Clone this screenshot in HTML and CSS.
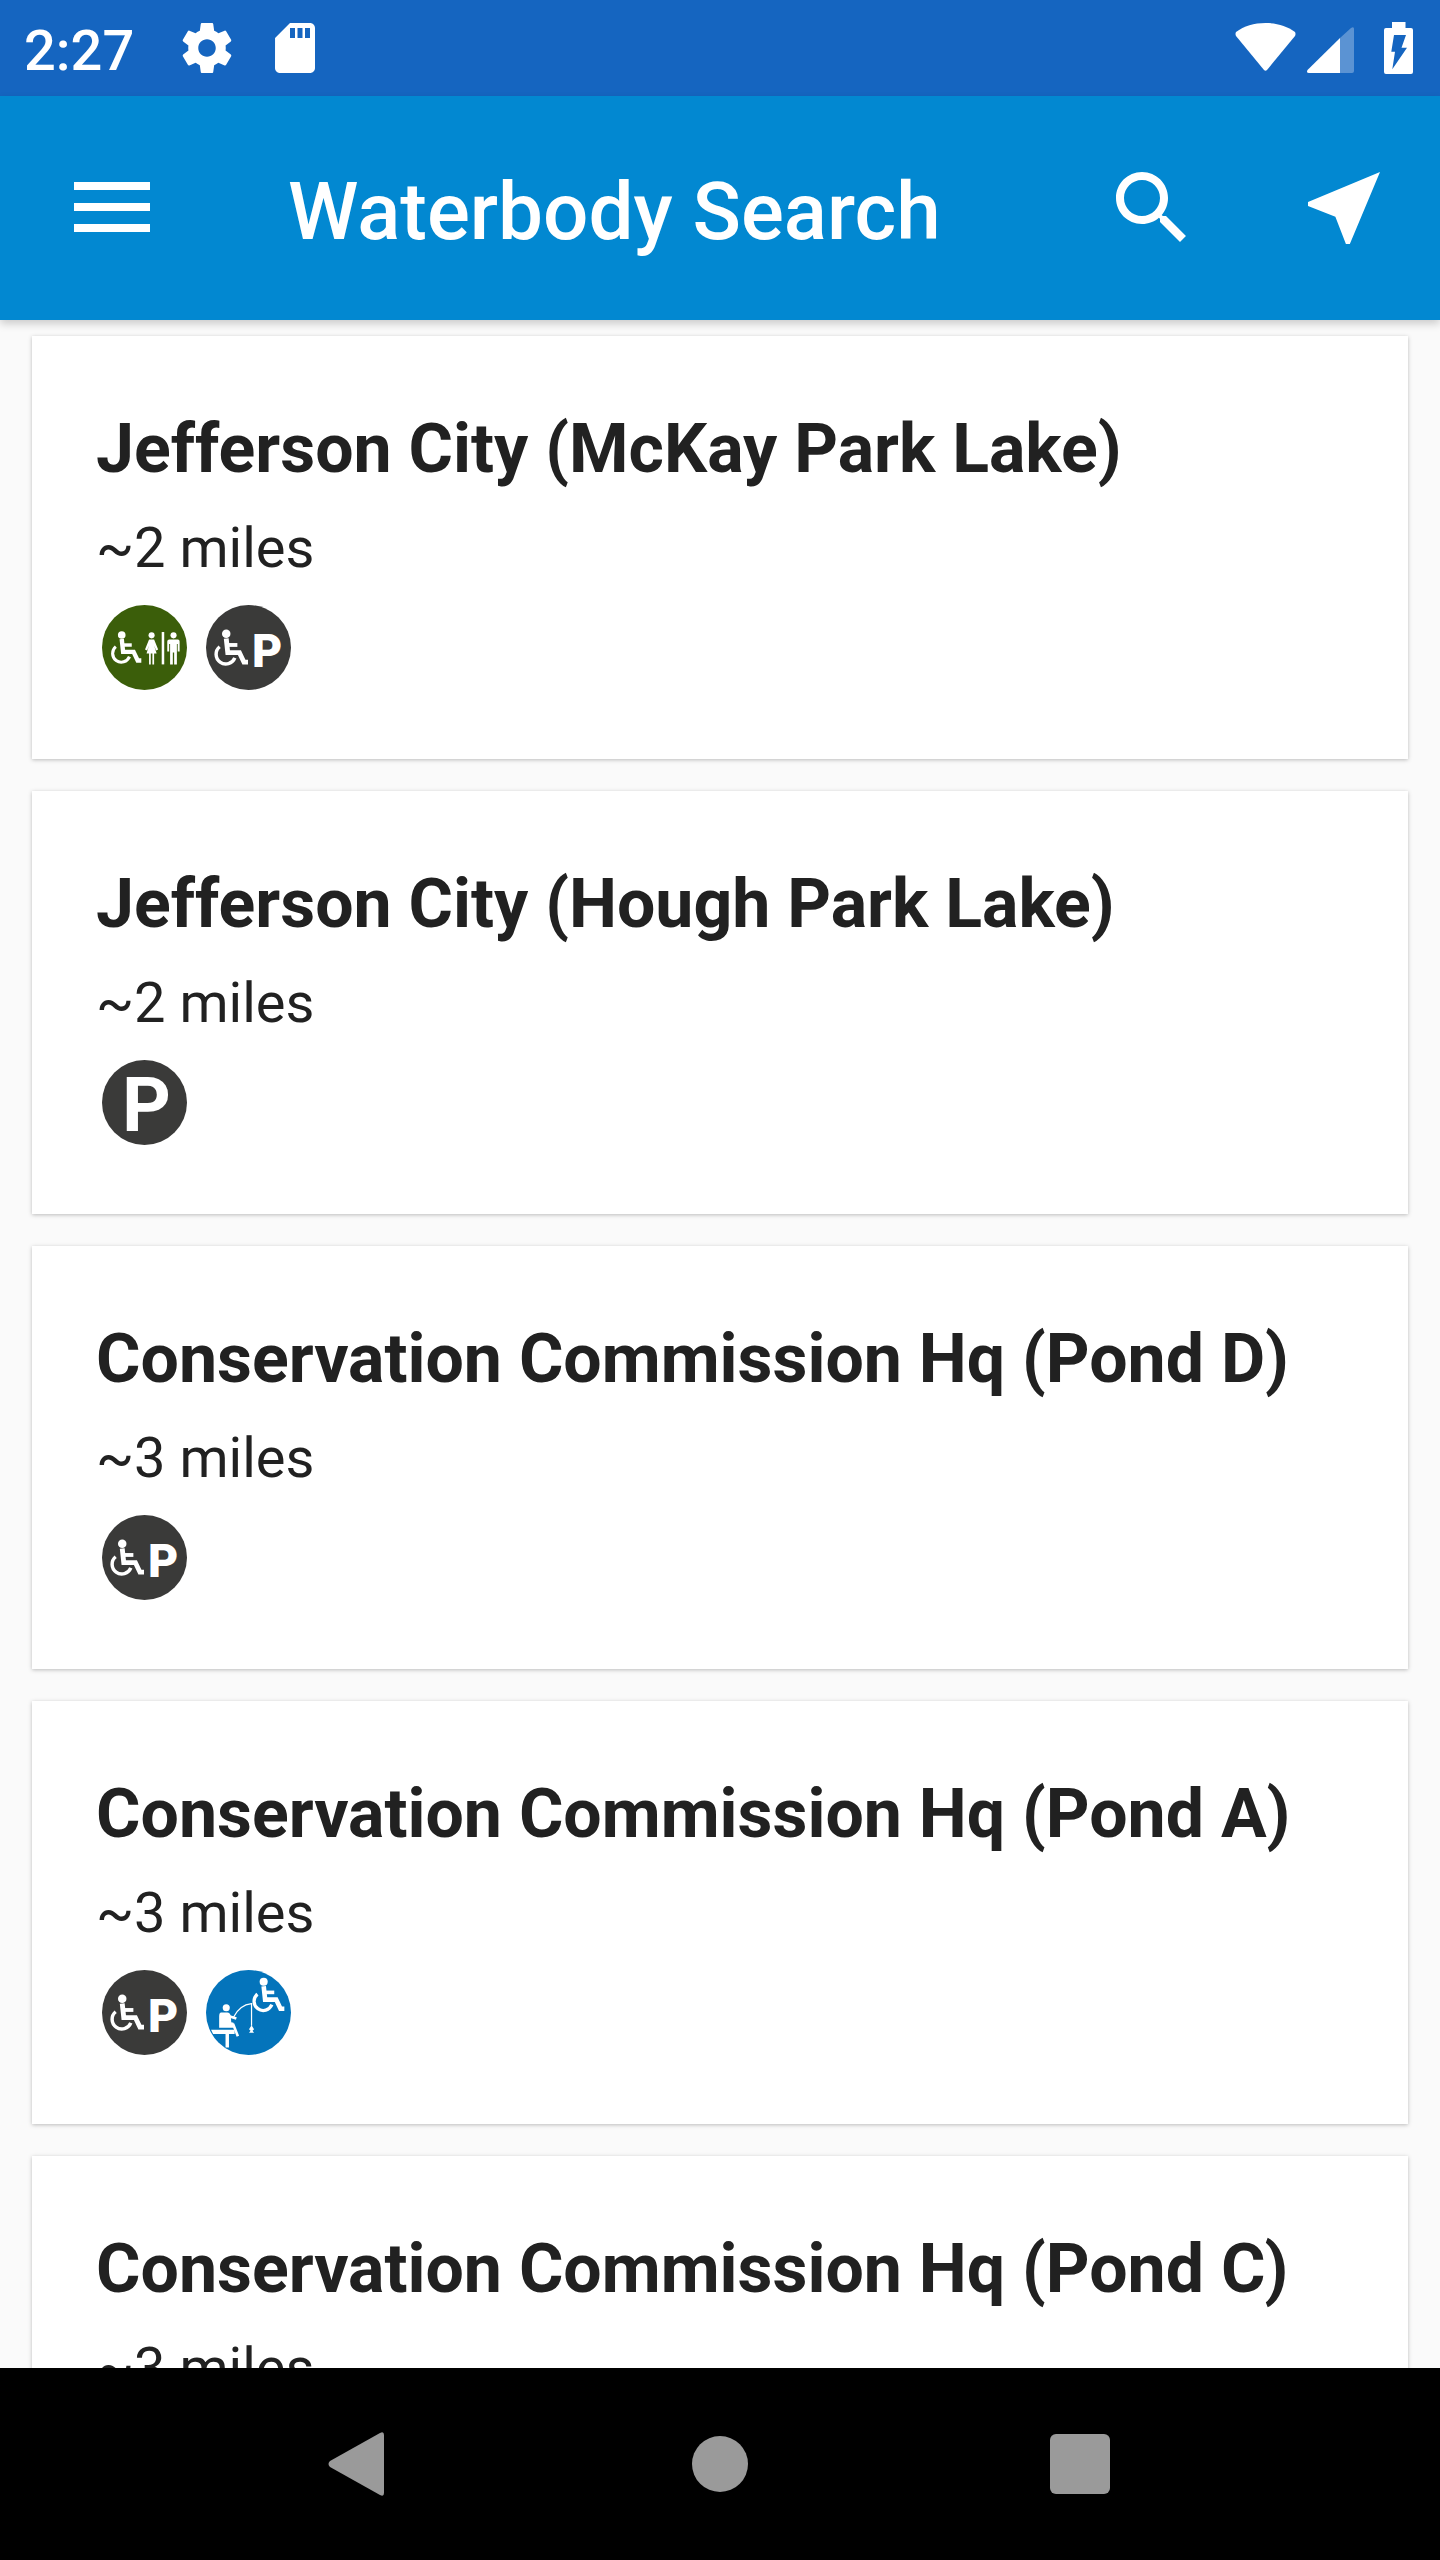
FILE: index.html
```html
<!DOCTYPE html>
<html lang="en">
<head>
<meta charset="utf-8">
<title>Waterbody Search</title>
<link rel="stylesheet" href="styles.css">
</head>
<body>
<svg class="defs" width="0" height="0" aria-hidden="true">
  <defs>
    <g id="chair">
      <circle cx="20" cy="28.5" r="4.2" fill="#fff"/>
      <path d="M20 33L21.500 47H33L37.500 56.500H41.500" fill="none" stroke="#fff" stroke-width="4.800"/>
      <path d="M21 39.500H31" fill="none" stroke="#fff" stroke-width="3.800"/>
      <path d="M13.500 41.300A9.600 9.600 0 1 0 28.500 52.300" fill="none" stroke="#fff" stroke-width="3.400"/>
    </g>
  </defs>
</svg>
<div class="app">
  <div class="status">
    <div class="status-left">
      <span class="clock">2:27</span>
      <svg class="ico-60 gear" viewBox="0 0 24 24"><path fill="#fff" d="M19.43 12.98c.04-.32.07-.64.07-.98s-.03-.66-.07-.98l2.11-1.65c.19-.15.24-.42.12-.64l-2-3.46c-.12-.22-.39-.3-.61-.22l-2.49 1c-.52-.4-1.08-.73-1.69-.98l-.38-2.65C14.46 2.18 14.25 2 14 2h-4c-.25 0-.46.18-.49.42l-.38 2.65c-.61.25-1.17.59-1.69.98l-2.49-1c-.23-.09-.49 0-.61.22l-2 3.46c-.13.22-.07.49.12.64l2.11 1.65c-.04.32-.07.65-.07.98s.03.66.07.98l-2.11 1.65c-.19.15-.24.42-.12.64l2 3.46c.12.22.39.3.61.22l2.49-1c.52.4 1.08.73 1.69.98l.38 2.65c.03.24.24.42.49.42h4c.25 0 .46-.18.49-.42l.38-2.65c.61-.25 1.17-.59 1.69-.98l2.49 1c.23.09.49 0 .61-.22l2-3.46c.12-.22.07-.49-.12-.64l-2.11-1.65zM12 15.500c-1.93 0-3.500-1.57-3.500-3.500s1.57-3.500 3.500-3.500 3.500 1.57 3.500 3.500-1.57 3.500-3.500 3.500z"/></svg>
      <svg class="ico-60 sd" viewBox="0 0 24 24"><path fill="#fff" d="M18 2h-8L4.020 8 4 20c0 1.100.9 2 2 2h12c1.100 0 2-.9 2-2V4c0-1.100-.9-2-2-2zm-6 6h-2V4h2v4zm3 0h-2V4h2v4zm3 0h-2V4h2v4z"/></svg>
    </div>
    <div class="status-right">
      <svg class="wifi" viewBox="0 0 61 48"><path fill="#fff" d="M1 9C9 3 19 0 30.500 0S52 3 60 9Q61 11 60 13L32 47Q30.500 48.500 29 47L1 13Q0 11 1 9Z"/></svg>
      <svg class="signal" viewBox="0 0 47 46"><path fill="#fff" fill-opacity=".3" d="M44 1Q47 -1 47 2V44Q47 46 45 46H33V11Z"/><path fill="#fff" d="M33 11V46H2Q-1 46 .5 43Z"/></svg>
      <svg class="battery" viewBox="0 0 29 52"><path fill="#fff" d="M8 0H21.500V6H27Q29 6 29 8V50Q29 52 27 52H2Q0 52 0 50V8Q0 6 2 6H8Z"/><path fill="#1565c0" d="M10 13H22L17.500 25.700H23L8.300 47.300L11 29.700H7.300Z"/></svg>
    </div>
  </div>
  <header class="toolbar">
    <svg class="ico-96 menu" viewBox="0 0 96 96"><path fill="#fff" d="M10 22H86V30H10ZM10 43H86V51H10ZM10 64H86V72H10Z"/></svg>
    <h1 class="toolbar-title">Waterbody Search</h1>
    <svg class="ico-96 search" viewBox="0 0 24 24"><path fill="#fff" d="M15.500 14h-.79l-.28-.27C15.410 12.590 16 11.110 16 9.500 16 5.910 13.090 3 9.500 3S3 5.910 3 9.500 5.910 16 9.500 16c1.610 0 3.090-.59 4.230-1.570l.27.28v.79l5 4.990L20.490 19l-4.990-5zm-6 0C7.010 14 5 11.990 5 9.500S7.010 5 9.500 5 14 7.010 14 9.500 11.990 14 9.500 14z"/></svg>
    <svg class="ico-96 near" viewBox="0 0 24 24"><path fill="#fff" d="M21 3L3 10.530v.98l6.840 2.650L12.480 21h.98L21 3z"/></svg>
  </header>
  <main class="list">
    <article class="card">
      <h2 class="name">Jefferson City (McKay Park Lake)</h2>
      <p class="dist">~2 miles</p>
      <div class="badges">
        <svg class="badge" viewBox="0 0 84 84"><circle cx="42" cy="42" r="42" fill="#3b5e0a"/><use href="#chair" transform="translate(1.500 4) scale(.9)"/><circle cx="49" cy="30" r="3" fill="#fff"/><path fill="#fff" d="M46.500 34H51.500L55.500 44L53.500 45L51.500 40L54 48H51.500V58.700H49.800V48H48.200V58.700H46.500V48H44L46.500 40L44.500 45L42.500 44Z"/><rect x="59" y="26.700" width="2.500" height="32" fill="#fff"/><circle cx="70.700" cy="30" r="3" fill="#fff"/><path fill="#fff" d="M66.500 34H75Q76.700 34 76.700 36V46H74.800V38.500H74V58.700H71.300V47H70V58.700H67.300V38.500H66.400V46H64.500V36Q64.500 34 66.500 34Z"/></svg>
        <svg class="badge" viewBox="0 0 84 84"><circle cx="42" cy="42" r="42" fill="#3a3a39"/><use href="#chair"/><text class="p-small" x="45.500" y="61">P</text></svg>
      </div>
    </article>
    <article class="card">
      <h2 class="name">Jefferson City (Hough Park Lake)</h2>
      <p class="dist">~2 miles</p>
      <div class="badges">
        <svg class="badge" viewBox="0 0 84 84"><circle cx="42" cy="42" r="42" fill="#3a3a39"/><text class="p-large" x="44" y="70">P</text></svg>
      </div>
    </article>
    <article class="card">
      <h2 class="name">Conservation Commission Hq (Pond D)</h2>
      <p class="dist">~3 miles</p>
      <div class="badges">
        <svg class="badge" viewBox="0 0 84 84"><circle cx="42" cy="42" r="42" fill="#3a3a39"/><use href="#chair"/><text class="p-small" x="45.500" y="61">P</text></svg>
      </div>
    </article>
    <article class="card">
      <h2 class="name">Conservation Commission Hq (Pond A)</h2>
      <p class="dist">~3 miles</p>
      <div class="badges">
        <svg class="badge" viewBox="0 0 84 84"><circle cx="42" cy="42" r="42" fill="#3a3a39"/><use href="#chair"/><text class="p-small" x="45.500" y="61">P</text></svg>
        <svg class="badge" viewBox="0 0 84 84"><circle cx="42" cy="42" r="42" fill="#0474bb"/><use href="#chair" transform="translate(38 -15.400) scale(.95)"/><circle cx="20" cy="37.300" r="3.500" fill="#fff"/><path fill="#fff" d="M15 42H21Q24 42 24.500 46L25 52H13V46Q13 42 15 42ZM13 52H27V57H13Z"/><path d="M22 45.500L30 48M24 53L27 54L31.500 65.500" fill="none" stroke="#fff" stroke-width="2.600"/><path fill="#fff" d="M5 59H28.300V63.300H22.700V76.700H19.300V63.300H7Z"/><path d="M27 47C31 39 38 34 45 33.300V55" fill="none" stroke="#fff" stroke-width="1.200"/><path fill="#fff" d="M45 54.500L47.500 58.500L46 60L47.500 62H42.500L44 60L42.500 58.500Z"/></svg>
      </div>
    </article>
    <article class="card">
      <h2 class="name">Conservation Commission Hq (Pond C)</h2>
      <p class="dist">~3 miles</p>
    </article>
  </main>
  <nav class="navbar">
    <svg class="nav-back" viewBox="0 0 56 64"><path fill="#9a9a9a" d="M56 3V61Q56 65 52 63L2 35Q-1 32 2 29L52 1Q56 -1 56 3Z"/></svg>
    <span class="nav-home"></span>
    <span class="nav-recent"></span>
  </nav>
</div>
</body>
</html>
```
FILE: styles.css
```css
* { box-sizing: border-box; }
html, body { margin: 0; padding: 0; }
body { width: 1440px; height: 2560px; overflow: hidden; font-family: Roboto, sans-serif; background: #fafafa; }
.defs { position: absolute; }
.app { width: 1440px; height: 2560px; display: flex; flex-direction: column; }

.status { flex: 0 0 96px; background: #1565c0; display: flex; justify-content: space-between; }
.status-left { display: flex; align-items: flex-start; padding-left: 24px; }
.clock { color: #fff; font-size: 56px; font-weight: 500; line-height: 90px; width: 153px; margin-top: 6px; }
.ico-60 { width: 60px; height: 60px; margin-top: 18px; flex: none; display: block; }
.sd { margin-left: 28px; }
.status-right { display: flex; align-items: flex-start; padding-right: 27px; }
.wifi { width: 61px; height: 48px; margin-top: 23px; }
.signal { width: 47px; height: 46px; margin: 27px 0 0 11px; }
.battery { width: 29px; height: 52px; margin: 22px 0 0 30px; }

.toolbar { flex: 0 0 224px; background: #0288d1; display: flex; align-items: center; position: relative; z-index: 2; box-shadow: 0 4px 8px rgba(0,0,0,.18); }
.ico-96 { width: 96px; height: 96px; flex: none; display: block; }
.menu { margin-left: 64px; }
.toolbar-title { margin: 7px 0 0 128px; flex: 1; color: #fff; font-size: 80px; font-weight: 500; line-height: 96px; }
.search { margin-right: 96px; }
.near { margin-right: 48px; }

.list { flex: 1; min-height: 0; overflow: hidden; padding: 16px 32px 0; display: flex; flex-direction: column; gap: 32px; background: #fafafa; }
.card { flex: 0 0 423px; background: #fff; padding: 64px 64px 0; box-shadow: 0 1px 4px rgba(0,0,0,.25); }
.name { margin: 0; font-size: 68px; font-weight: 700; line-height: 98px; color: #212121; }
.dist { margin: 8px 0 0; font-size: 56px; line-height: 84px; color: #212121; }
.badges { display: flex; gap: 19px; margin: 15px 0 0 6px; }
.badge { width: 85px; height: 85px; display: block; flex: none; }
.p-small { font: 900 46px Roboto, sans-serif; fill: #fff; }
.p-large { font: 700 75px Roboto, sans-serif; fill: #fff; text-anchor: middle; }

.navbar { flex: 0 0 192px; background: #000; position: relative; z-index: 2; display: flex; align-items: center; }
.nav-back { width: 56px; height: 64px; margin-left: 328px; flex: none; }
.nav-home { width: 56px; height: 56px; border-radius: 50%; background: #9a9a9a; margin-left: 308px; flex: none; }
.nav-recent { width: 60px; height: 60px; border-radius: 6px; background: #9a9a9a; margin-left: 302px; flex: none; }
```
